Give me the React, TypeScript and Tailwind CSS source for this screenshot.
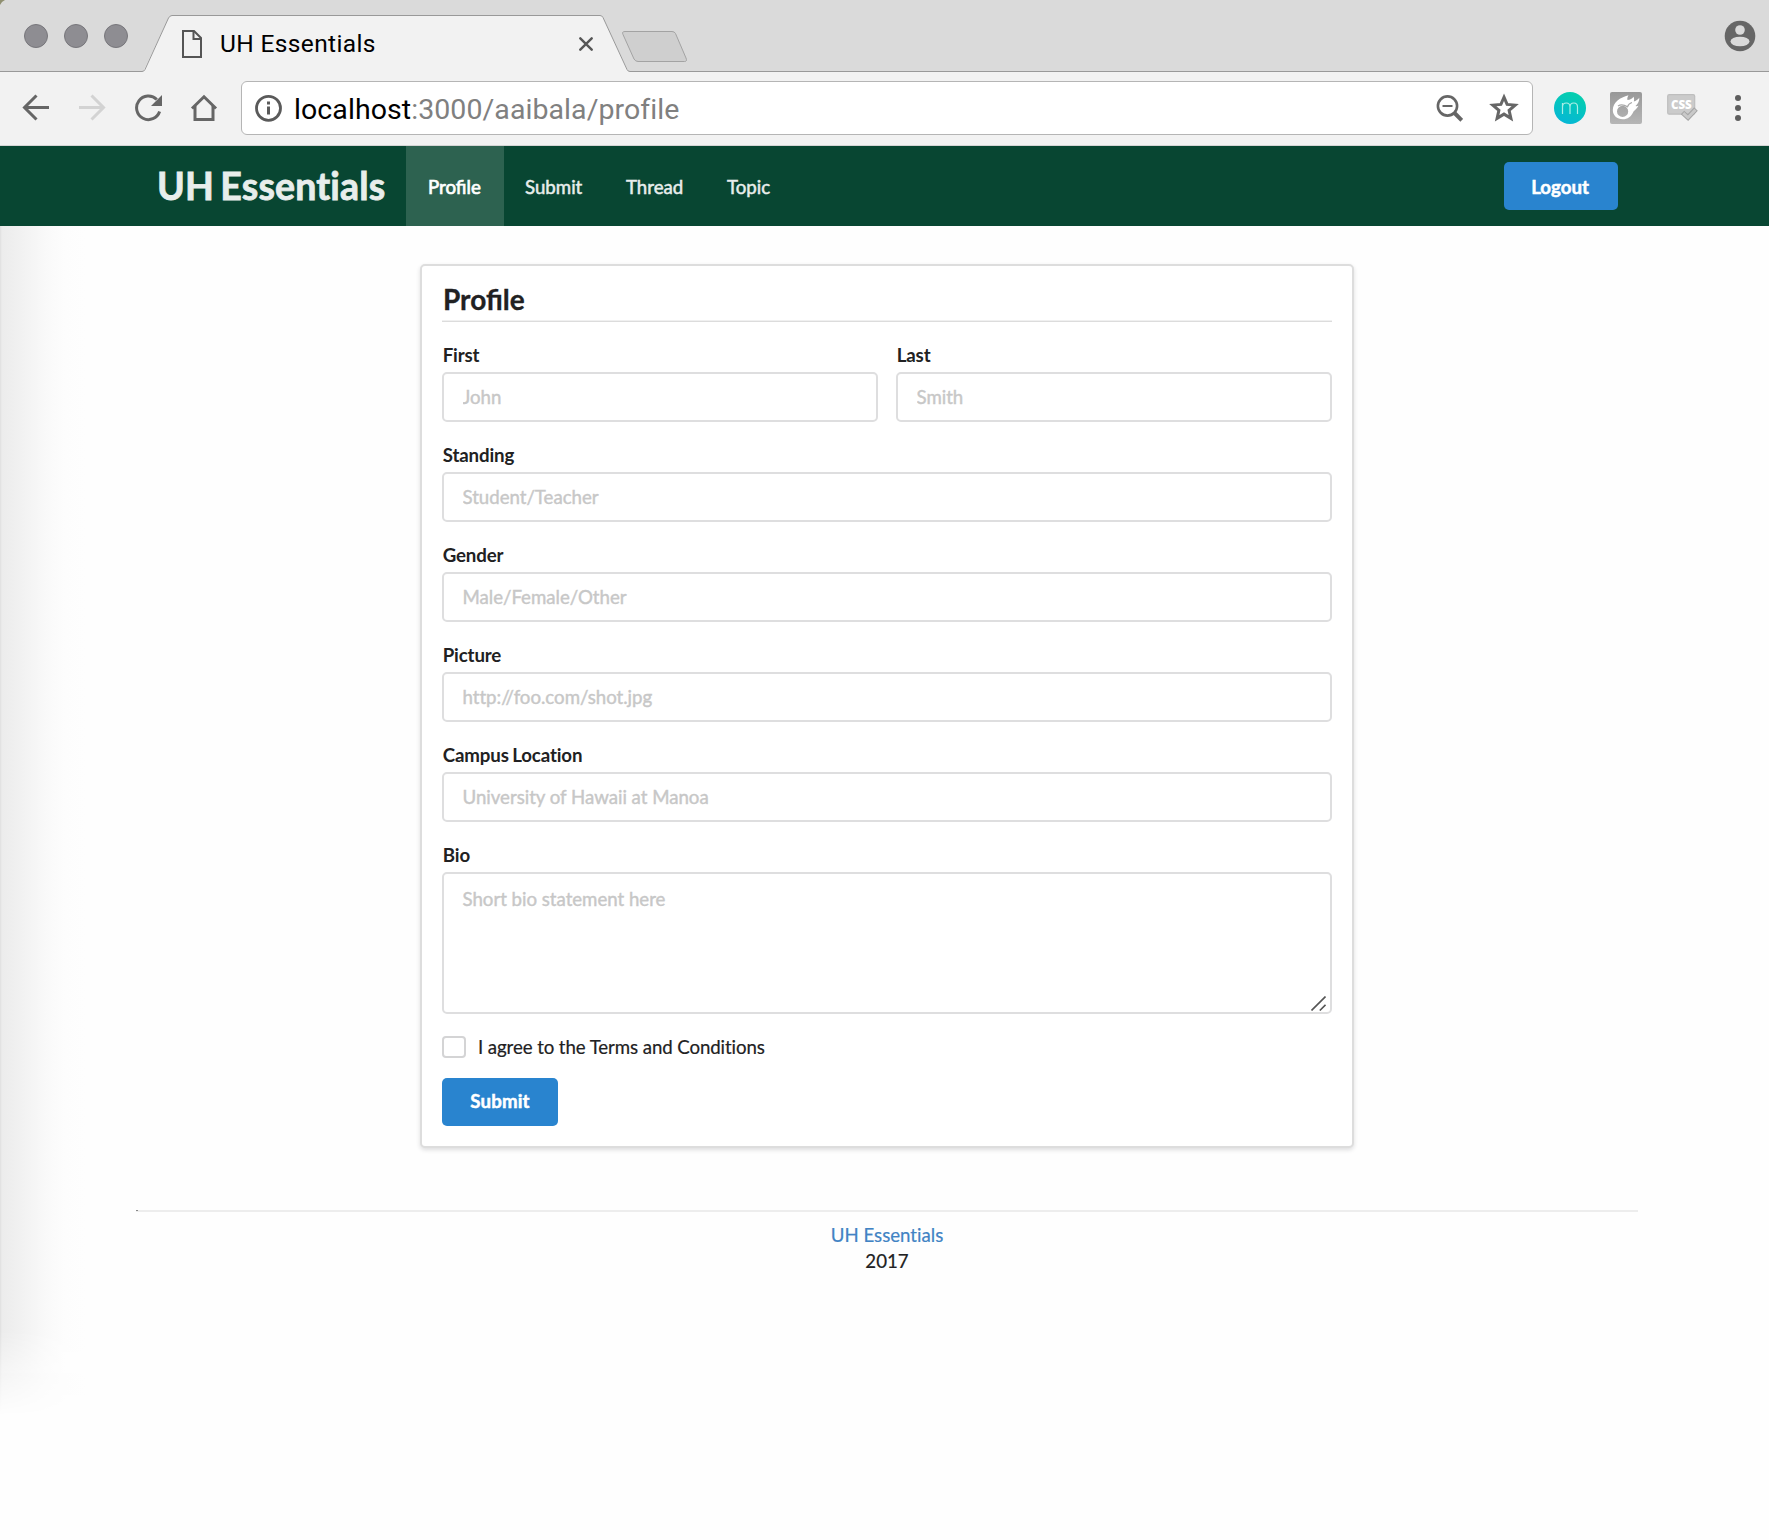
import React from "react";

function TabStrip() {
  return (
    <header className="relative h-[72px] bg-[#dadada] flex">
      <svg className="absolute inset-0" width="1769" height="72" viewBox="0 0 1769 72">
        <path d="M0 0H5Q1.500 1.500 0 5Z" fill="#8f8f70" />
        <path d="M143 72L168.500 18Q170 15.500 172 15.500H600Q602 15.500 603 17.500L628.500 72Z" fill="#f2f2f2" />
        <path d="M0 71.500H142Q144 71.500 145 69.500L168.500 18Q170 15.500 172 15.500H600Q602 15.500 603 17.500L627 69.500Q628 71.500 630 71.500H1769" fill="none" stroke="#999" />
        <path d="M625 31.500H672Q674.500 31.500 675.500 33.500L686 58Q687.500 61.500 684.500 61.500H638Q635.500 61.500 634 59L623 34.500Q621.500 31.500 625 31.500Z" fill="#cfcfcf" stroke="#a3a3a3" />
      </svg>
      <div className="relative flex gap-4 pl-6 pt-6 w-[182px]">
        {[0, 1, 2].map((i) => (
          <span key={i} className="size-6 rounded-full bg-[#8e8d92] border border-[#77767b]" />
        ))}
      </div>
      <svg className="relative mt-[30px]" width="20" height="28" viewBox="0 0 20 28" fill="none" stroke="#555" strokeWidth="2">
        <path d="M1 1H12L19 8V27H1Z" />
        <path d="M11.500 1V9H19" />
      </svg>
      <span className="relative ml-[18px] mt-[29px] w-[359px] leading-[30px] text-[24.500px] tracking-[0.360px] text-black whitespace-nowrap font-['Roboto',sans-serif]">
        UH Essentials
      </span>
      <svg className="relative mt-[37px]" width="14" height="14" viewBox="0 0 14 14" stroke="#555" strokeWidth="2.4" strokeLinecap="round">
        <path d="M1.300 1.300L12.700 12.700M12.700 1.300L1.300 12.700" />
      </svg>
      <svg className="relative ml-auto mr-[13px] mt-5" width="32" height="32" viewBox="0 0 32 32">
        <circle cx="16" cy="16" r="15.300" fill="#666" />
        <circle cx="16" cy="10" r="4.800" fill="#dadada" />
        <ellipse cx="16" cy="21.500" rx="9.500" ry="4.800" fill="#dadada" />
      </svg>
    </header>
  );
}

function Toolbar() {
  return (
    <div className="h-[74px] bg-[#f2f2f2] border-b border-[#d5d5d5] flex items-start">
      <svg className="ml-[22px] mt-[22px]" width="28" height="28" viewBox="0 0 28 28" fill="none" stroke="#666" strokeWidth="3">
        <path d="M27 13.500H3M14.500 1.500L2.500 13.500L14.500 25.500" />
      </svg>
      <svg className="ml-[28px] mt-[22px]" width="28" height="28" viewBox="0 0 28 28" fill="none" stroke="#d3d3d3" strokeWidth="3">
        <path d="M1 13.500H25M13.500 1.500L25.500 13.500L13.500 25.500" />
      </svg>
      <svg className="ml-[28px] mt-[22px]" width="30" height="28" viewBox="0 0 30 28">
        <path d="M22.800 5.500A11.800 11.800 0 1 0 25.600 17.500" fill="none" stroke="#666" strokeWidth="3" />
        <path d="M28 1V12H17Z" fill="#666" />
      </svg>
      <svg className="ml-[26px] mt-[22px]" width="28" height="28" viewBox="0 0 28 28" fill="none" stroke="#666" strokeWidth="3">
        <path d="M2 14.500L14 2.800L26 14.500" />
        <path d="M5 12V25.500H23V12" />
      </svg>
      <div className="ml-[23px] mt-[9px] w-[1292px] h-[54px] rounded-[6px] border border-[#b5b5b5] bg-white flex items-center">
        <svg className="ml-[13px]" width="28" height="28" viewBox="0 0 28 28">
          <circle cx="13.500" cy="14.300" r="12" fill="none" stroke="#5a5a5a" strokeWidth="2.800" />
          <path d="M12 7.500h3v3h-3zM12 12.500h3v8h-3z" fill="#5a5a5a" />
        </svg>
        <span className="ml-[11px] pt-[4px] text-[28.500px] tracking-[0.070px] whitespace-nowrap font-['Roboto',sans-serif] text-[#808080]">
          <span className="text-black">localhost</span>:3000/aaibala/profile
        </span>
        <svg className="ml-auto" width="28" height="28" viewBox="0 0 28 28" fill="none" stroke="#666">
          <circle cx="12.500" cy="12" r="9.600" strokeWidth="2.600" />
          <path d="M7.500 12H17.500" strokeWidth="2" />
          <path d="M19 18.500L26.800 26.300" strokeWidth="4" />
        </svg>
        <svg className="ml-[25px] mr-[12px]" width="32" height="30" viewBox="0 0 32 30" fill="none" stroke="#666" strokeWidth="3">
          <path d="M16 4.200L19.100 11.400L27.200 12.100L21.100 17.400L22.900 25.300L16 21.100L9.100 25.300L10.900 17.400L4.800 12.100L12.900 11.400Z" />
        </svg>
      </div>
      <svg className="ml-[21px] mt-5" width="32" height="32" viewBox="0 0 32 32">
        <defs>
          <linearGradient id="mGrad" x1="0" y1="1" x2="0.400" y2="0">
            <stop offset="0" stopColor="#05b4db" />
            <stop offset="1" stopColor="#05cdb0" />
          </linearGradient>
        </defs>
        <circle cx="16" cy="16" r="16" fill="url(#mGrad)" />
        <path d="M8.500 22V11M8.500 15Q8.500 11 12.300 11Q16 11 16 15V22M16 15Q16 11 19.800 11Q23.500 11 23.500 15V22" fill="none" stroke="#a9eee6" strokeWidth="1.200" />
      </svg>
      <svg className="ml-6 mt-5" width="32" height="32" viewBox="0 0 32 32">
        <defs>
          <linearGradient id="cometGrad" x1="0" y1="0" x2="0" y2="1">
            <stop offset="0" stopColor="#989898" />
            <stop offset="1" stopColor="#b6b6b6" />
          </linearGradient>
        </defs>
        <rect width="32" height="32" rx="2" fill="url(#cometGrad)" />
        <path
          fillRule="evenodd"
          d="M2.800 18C3 10 10 5.500 18.500 3.200C17.500 5 17 6.500 17.500 8C20 8 22.500 6.500 23.500 4.800C24.300 6.500 24.200 8 23.800 9.500C26 9 28 7.500 29.300 5.800C29.500 9 28 12 25.500 14C26.500 14.300 27.500 14.200 28.500 13.800C27 16.500 25.300 18 23.500 19.500C21.500 24.500 17.500 27.300 12.800 27.300C7 27.300 2.800 23.500 2.800 18ZM12.600 13.800A5.600 5.600 0 1 0 12.600 25A5.600 5.600 0 1 0 12.600 13.800Z"
          fill="#fff"
        />
        <path d="M8 14Q12 11.500 17.500 14.800Q18.500 11.500 22 10.500" stroke="#a8a8a8" strokeWidth="1.200" fill="none" />
      </svg>
      <svg className="ml-[24px] mt-5" width="34" height="32" viewBox="0 0 34 32">
        <rect x="1.700" y="2.700" width="27" height="19.500" rx="1.500" fill="#cbcbcb" stroke="#bebebe" strokeWidth="1.200" />
        <text x="15.300" y="16.800" textAnchor="middle" fontSize="11.500" fontWeight="800" fill="#fff" fontFamily="Open Sans, sans-serif">CSS</text>
        <path d="M16.500 20.500L22 25.500L30 17" fill="none" stroke="#a5a5a5" strokeWidth="5" />
        <path d="M17.200 21.100L22 25.500L29.400 17.700" fill="none" stroke="#c9c9c9" strokeWidth="3" />
      </svg>
      <div className="ml-[35px] mt-[23px] flex flex-col gap-1">
        <span className="size-1.5 rounded-full bg-[#5e5e5e]" />
        <span className="size-1.5 rounded-full bg-[#5e5e5e]" />
        <span className="size-1.5 rounded-full bg-[#5e5e5e]" />
      </div>
    </div>
  );
}

function NavBar() {
  return (
    <nav className="h-20 bg-[#084632] flex items-center pl-[157px] pr-[151px] text-[18.670px] text-[#e8eeec] [-webkit-text-stroke:0.5px]">
      <span className="w-[249px] pt-px text-[37.500px] font-bold whitespace-nowrap tracking-[0.150px] [word-spacing:-3px] [font-variant-ligatures:none] [-webkit-text-stroke:0.8px]">
        UH Essentials
      </span>
      <a className="h-20 w-[98px] pt-[2px] bg-[#2d6250] text-white flex items-center pl-[22px] [-webkit-text-stroke:0.7px]">Profile</a>
      <a className="w-[101px] pt-[2px] pl-[21px]">Submit</a>
      <a className="w-[101px] pt-[2px] pl-[21px]">Thread</a>
      <a className="pt-[2px] pl-[21px]">Topic</a>
      <button className="ml-auto w-[114px] h-12 pt-0.5 pr-[2px] rounded-[5px] bg-[#2984cf] text-white font-bold">Logout</button>
    </nav>
  );
}

function Field({ label, placeholder }: { label: string; placeholder: string }) {
  return (
    <label className="flex-1 block">
      <span className="block h-[22px] leading-[22px] pl-[0.700px] font-bold tracking-[-0.120px] [word-spacing:-1px] [font-variant-ligatures:none]">{label}</span>
      <input
        placeholder={placeholder}
        className="mt-1.5 block w-full h-[50px] px-[18.500px] tracking-[-0.020px] border-2 border-[#dededf] rounded-[5px] bg-white outline-none placeholder:text-[#c7c7c7] placeholder:[-webkit-text-stroke:0.4px]"
      />
    </label>
  );
}

function ProfileForm() {
  return (
    <form className="mt-[38px] ml-[420px] w-[934px] h-[884px] border-2 border-[#dddddd] rounded-[5px] px-5 pt-4 bg-white shadow-[0_2px_4px_0_rgba(34,36,38,0.15)] flex flex-col">
      <h1 className="h-[40px] leading-[34px] pl-px text-[28px] font-bold border-b border-[#dcdcdc] shadow-[inset_0_-1px_0_#f0f0f0] [-webkit-text-stroke:0.3px]">Profile</h1>
      <div className="mt-[22px] flex flex-col gap-[22px]">
        <div className="flex gap-[18px]">
          <Field label="First" placeholder="John" />
          <Field label="Last" placeholder="Smith" />
        </div>
        <Field label="Standing" placeholder="Student/Teacher" />
        <Field label="Gender" placeholder="Male/Female/Other" />
        <Field label="Picture" placeholder="http://foo.com/shot.jpg" />
        <Field label="Campus Location" placeholder="University of Hawaii at Manoa" />
        <label className="block">
          <span className="block h-[22px] leading-[22px] pl-[0.700px] font-bold">Bio</span>
          <div className="relative mt-1.5">
            <textarea
              placeholder="Short bio statement here"
              className="block w-full h-[142px] px-[18.500px] py-[13px] leading-6 tracking-[-0.020px] border-2 border-[#dededf] rounded-[5px] bg-white outline-none resize-none placeholder:text-[#c7c7c7] placeholder:[-webkit-text-stroke:0.4px]"
            />
            <svg className="absolute right-[6px] bottom-[3px]" width="15" height="15" viewBox="0 0 15 15" stroke="#555" strokeWidth="1.600">
              <path d="M0.500 14.500L14.500 0.500M8.800 14.500L14.500 8.800" />
            </svg>
          </div>
        </label>
        <div className="h-[22px] flex items-center">
          <span className="w-6 h-[22px] rounded-[4px] border-2 border-[#d4d4d5] bg-white" />
          <span className="ml-3 tracking-[-0.090px] [font-variant-ligatures:none] [-webkit-text-stroke:0.2px]">I agree to the Terms and Conditions</span>
        </div>
      </div>
      <button type="button" className="mt-5 w-[116px] h-12 pb-[2px] rounded-[5px] bg-[#2984cf] text-white font-bold tracking-[0.150px] [-webkit-text-stroke:0.5px]">
        Submit
      </button>
    </form>
  );
}

function Footer() {
  return (
    <footer className="relative mt-[62px] ml-[136px] w-[1502px] border-t-2 border-[#ededed] pt-2.5 text-center leading-[26px] [-webkit-text-stroke:0.2px]">
      <span className="absolute left-0 -top-[2px] w-0.5 h-px bg-[#888]" />
      <a className="block text-[#4183c4] [font-variant-ligatures:none]">UH Essentials</a>
      <div>2017</div>
    </footer>
  );
}

export default function App() {
  return (
    <div className="relative w-[1769px] h-[1540px] overflow-hidden bg-[#fefefe] font-['Lato',sans-serif] text-[18.670px] text-[#212122]">
      <TabStrip />
      <Toolbar />
      <NavBar />
      <div className="absolute left-0 top-[226px] w-[90px] h-[1214px] bg-[linear-gradient(to_right,#dfdfdf,#ececec_2px,#f1f1f1_20px,#f9f9f9_45px,#fdfdfd_65px,#fefefe_85px)] [mask-image:linear-gradient(to_bottom,#000_91%,transparent_98%)]" />
      <ProfileForm />
      <Footer />
    </div>
  );
}
